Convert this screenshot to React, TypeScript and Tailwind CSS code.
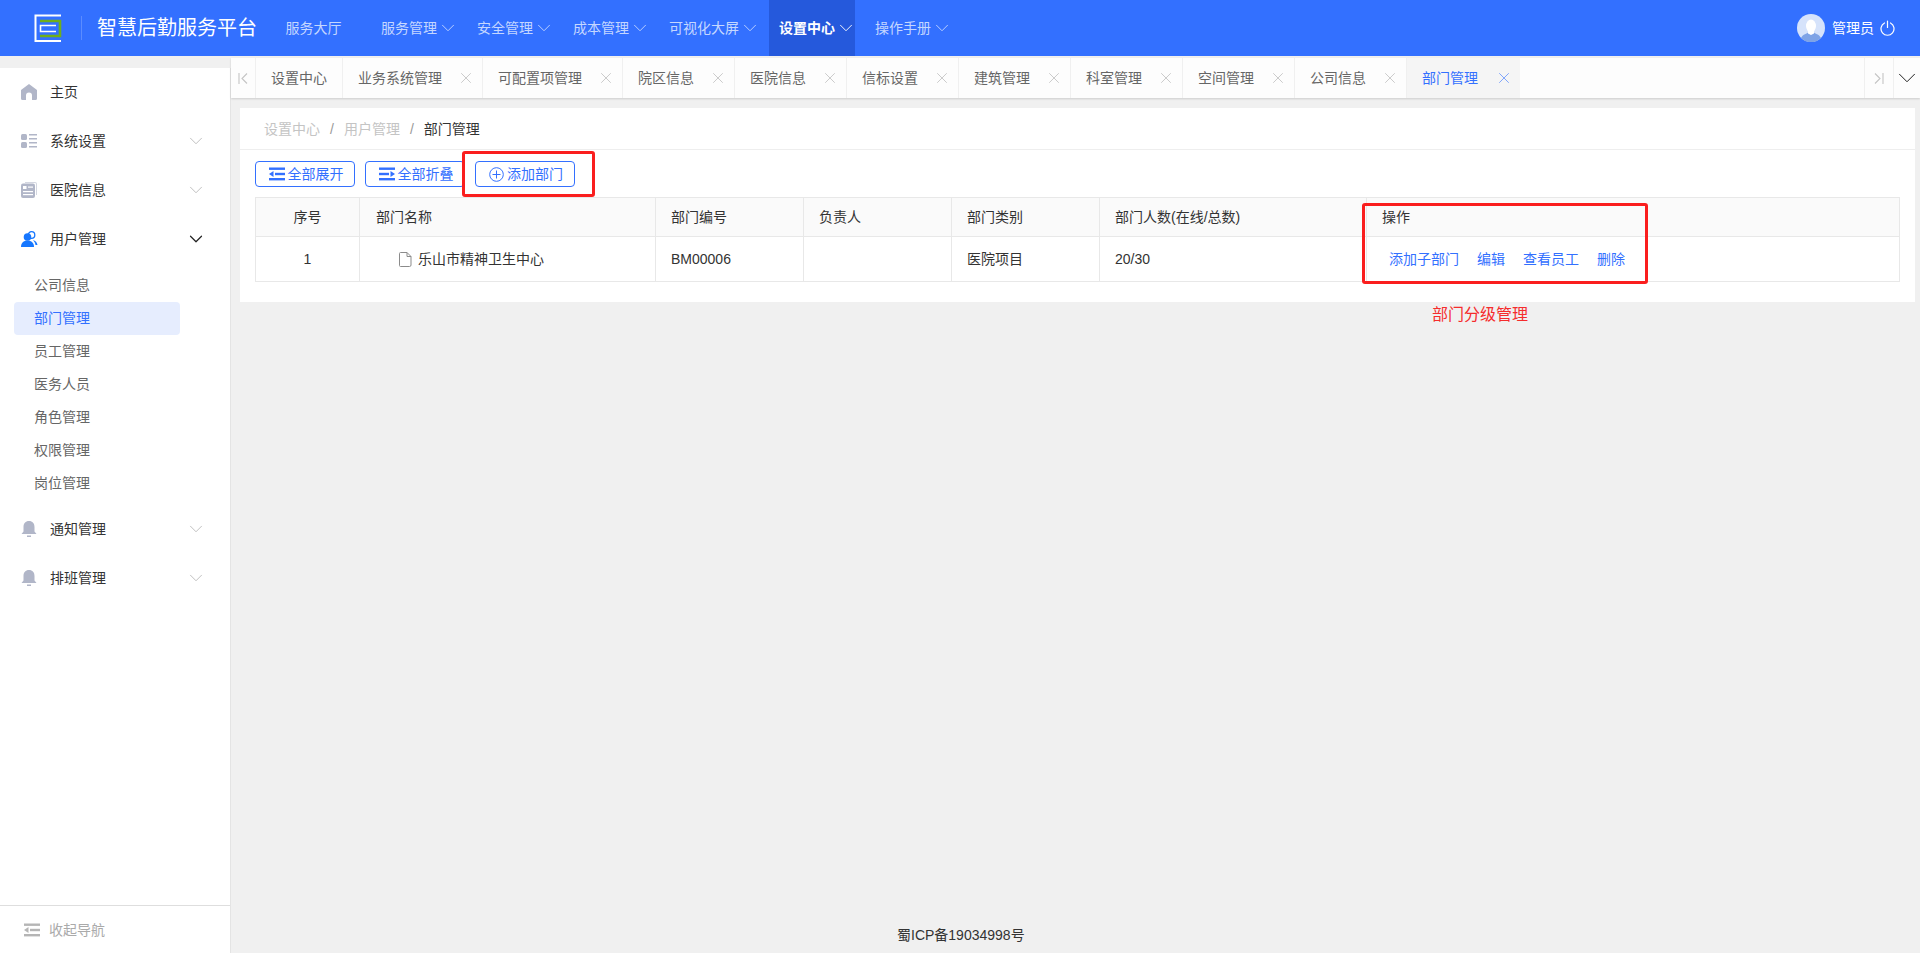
import { ChevronDown, X } from "lucide-react";

const navItems = [
  { label: "服务管理", w: "w-[86px]" },
  { label: "安全管理", w: "w-[86px]" },
  { label: "成本管理", w: "w-[86px]" },
  { label: "可视化大屏", w: "w-[100px]" },
  { label: "设置中心", w: "w-[86px]", active: true },
  { label: "操作手册", w: "w-[86px]" },
];

const tabs = [
  { label: "业务系统管理", w: "w-[140px]" },
  { label: "可配置项管理", w: "w-[140px]" },
  { label: "院区信息", w: "w-[112px]" },
  { label: "医院信息", w: "w-[112px]" },
  { label: "信标设置", w: "w-[112px]" },
  { label: "建筑管理", w: "w-[112px]" },
  { label: "科室管理", w: "w-[112px]" },
  { label: "空间管理", w: "w-[112px]" },
  { label: "公司信息", w: "w-[112px]" },
];

const subMenu = ["公司信息", "部门管理", "员工管理", "医务人员", "角色管理", "权限管理", "岗位管理"];

function Logo() {
  return (
    <svg width="28" height="28" viewBox="0 0 28 28" fill="none">
      <path d="M27 1.500H1.500V27H27" stroke="#fff" strokeWidth="2" />
      <path d="M6 7H26V22H6" stroke="#6fae1c" strokeWidth="2.600" />
      <path d="M22 11.500H6.500V17.500H22" stroke="#fff" strokeWidth="1.600" />
    </svg>
  );
}

function Avatar() {
  return (
    <svg width="28" height="28" viewBox="0 0 28 28">
      <circle cx="14" cy="14" r="14" fill="#d6e3fb" />
      <path d="M4 24c2-4 6-4.500 7.500-5.500h5C18 19.500 22 20 24 24a14 14 0 0 1-20 0z" fill="#7ea3e6" />
      <ellipse cx="14" cy="12" rx="5" ry="6.500" fill="#fff" />
      <path d="M11 16h6v3.500l-3 1.500-3-1.500z" fill="#fff" />
    </svg>
  );
}

function PowerIcon() {
  return (
    <svg width="15" height="16" viewBox="0 0 15 16" fill="none" stroke="#fff" strokeWidth="1.200" strokeLinecap="round">
      <path d="M4.500 3a6.500 6.500 0 1 0 6 0" />
      <path d="M7.500 1v6.500" />
    </svg>
  );
}

function HomeIcon() {
  return (
    <svg width="16" height="16" viewBox="0 0 16 16" fill="#b1b6c8">
      <path d="M8 0l8 6v8.500a1.500 1.500 0 0 1-1.500 1.500H11v-4.500a3 3 0 0 0-6 0V16H1.500A1.500 1.500 0 0 1 0 14.500V6z" />
    </svg>
  );
}

function GridIcon() {
  return (
    <svg width="16" height="16" viewBox="0 0 16 16" fill="#b1b6c8">
      <rect x="0" y="1" width="6" height="6" rx="1.500" />
      <rect x="0" y="9" width="6" height="6" rx="1.500" />
      <rect x="8" y="1" width="8" height="1.500" />
      <rect x="8" y="5" width="8" height="1.500" />
      <rect x="8" y="9" width="8" height="1.500" />
      <rect x="8" y="13" width="8" height="1.500" />
    </svg>
  );
}

function NewsIcon() {
  return (
    <svg width="16" height="16" viewBox="0 0 16 16">
      <path d="M4 0h10a2 2 0 0 1 2 2v11h-1V2a1 1 0 0 0-1-1H4z" fill="#d3d6e0" />
      <rect x="0" y="1.500" width="14" height="14.500" rx="2" fill="#b1b6c8" />
      <rect x="2" y="4" width="3.500" height="3" fill="#fff" />
      <rect x="7" y="4.500" width="5" height="1.200" fill="#fff" />
      <rect x="2" y="9" width="10" height="1.200" fill="#fff" />
      <rect x="2" y="12" width="10" height="1.200" fill="#fff" />
    </svg>
  );
}

function UserIcon() {
  return (
    <svg width="17" height="16" viewBox="0 0 17 16">
      <circle cx="10.500" cy="4" r="3.300" fill="none" stroke="#1677ff" strokeWidth="1.300" />
      <path d="M12 9c2.500.5 4 2.500 4.500 5h-2c-.3-2-1.200-3.500-2.500-5z" fill="#1677ff" />
      <circle cx="6.500" cy="6" r="3.800" fill="#1677ff" />
      <path d="M0 16c0-4 2.500-6.500 6.500-6.500S13 12 13 16z" fill="#1677ff" />
    </svg>
  );
}

function BellIcon() {
  return (
    <svg width="16" height="16" viewBox="0 0 16 16" fill="#b1b6c8">
      <path d="M8 0c3.500 0 5.500 2.500 5.500 6v4.500L15.500 13H.5l2-2.500V6C2.500 2.500 4.500 0 8 0z" />
      <rect x="6" y="14.500" width="4" height="1.500" />
    </svg>
  );
}

function CollapseIcon({ color, dir }: { color: string; dir: "left" | "right" }) {
  return (
    <svg width="16" height="14" viewBox="0 0 16 14" fill={color}>
      <rect x="0" y="0.500" width="16" height="2.400" />
      <rect x="0" y="11" width="16" height="2.400" />
      {dir === "left" ? (
        <>
          <rect x="6" y="5.800" width="10" height="2.400" />
          <path d="M0 7l4.500-3v6z" />
        </>
      ) : (
        <>
          <rect x="0" y="5.800" width="10" height="2.400" />
          <path d="M16 7l-4.500-3v6z" />
        </>
      )}
    </svg>
  );
}

function FileIcon() {
  return (
    <svg width="13" height="15" viewBox="0 0 13 15" fill="none" stroke="#8b8b8b" strokeWidth="1">
      <path d="M1.500.5h6.500l4 4v8.500a1.500 1.500 0 0 1-1.500 1.500h-9A1 1 0 0 1 .5 13.500v-12a1 1 0 0 1 1-1z" />
      <path d="M8 .5v4h4" />
    </svg>
  );
}

function EdgeArrow({ dir }: { dir: "first" | "last" }) {
  return (
    <svg width="10" height="11" viewBox="0 0 10 11" fill="none" stroke="#c4c4c4" strokeWidth="1.100">
      {dir === "first" ? (
        <>
          <path d="M1 0v11" />
          <path d="M9 .5L4 5.500l5 5" />
        </>
      ) : (
        <>
          <path d="M9 0v11" />
          <path d="M1 .5l5 5-5 5" />
        </>
      )}
    </svg>
  );
}

function SideItem({ icon, label, arrow, open }: { icon: React.ReactNode; label: string; arrow?: boolean; open?: boolean }) {
  return (
    <div className="flex h-[49px] items-center pr-[23px] pl-[21px] text-sm text-[#333]">
      <span className="flex w-[29px] shrink-0 items-center">{icon}</span>
      <span>{label}</span>
      {arrow && (
        <ChevronDown
          size={22}
          strokeWidth={open ? 1.300 : 0.800}
          className={open ? "ml-auto text-[#222]" : "ml-auto text-[#aaa]"}
        />
      )}
    </div>
  );
}

export default function App() {
  return (
    <div className="relative flex h-screen w-full flex-col overflow-hidden bg-[#f0f0f0] text-sm [font-family:'Liberation_Sans','Noto_Sans_CJK_SC',sans-serif]">
      {/* Top bar */}
      <header className="flex h-14 shrink-0 items-center bg-[#3370ff]">
        <div className="ml-[34px] flex h-7 items-center">
          <Logo />
        </div>
        <div className="ml-[19px] h-6 w-px bg-white/20" />
        <div className="ml-[15px] w-[159px] text-xl whitespace-nowrap text-white">智慧后勤服务平台</div>
        <nav className="ml-[20px] flex h-full items-center gap-[10px]">
          <a className="mr-[10px] flex h-full w-[75px] items-center justify-center text-[#c5d7ff]">服务大厅</a>
          {navItems.map((item) => (
            <a
              key={item.label}
              className={
                item.active
                  ? `flex h-full ${item.w} items-center bg-[#2559dc] pl-[10px] font-bold text-white`
                  : `flex h-full ${item.w} items-center pl-[10px] text-[#c5d7ff]`
              }
            >
              <span className="whitespace-nowrap">{item.label}</span>
              <ChevronDown
                size={22}
                strokeWidth={1}
                className={item.active ? "shrink-0 text-white" : "shrink-0 text-[#c5d7ff]"}
              />
            </a>
          ))}
        </nav>
        <div className="ml-auto flex items-center pr-[25px]">
          <Avatar />
          <span className="ml-[7px] text-white">管理员</span>
          <span className="ml-[6px] flex">
            <PowerIcon />
          </span>
        </div>
      </header>

      <div className="flex min-h-0 flex-1">
        {/* Side menu */}
        <aside className="mt-3 flex w-[231px] shrink-0 flex-col border-r border-[#e4e4e4] bg-white">
          <div className="-mt-px flex-1">
            <SideItem icon={<HomeIcon />} label="主页" />
            <SideItem icon={<GridIcon />} label="系统设置" arrow />
            <SideItem icon={<NewsIcon />} label="医院信息" arrow />
            <SideItem icon={<UserIcon />} label="用户管理" arrow open />
            <ul className="py-[5px]">
              {subMenu.map((name) => (
                <li
                  key={name}
                  className={
                    name === "部门管理"
                      ? "mx-[14px] flex h-[33px] w-[166px] translate-y-px items-center rounded bg-[#e6edfe] pb-[2px] pl-[20px] text-[#3370ff]"
                      : "mx-[14px] flex h-[33px] items-center pl-[20px] text-[#666]"
                  }
                >
                  {name}
                </li>
              ))}
            </ul>
            <SideItem icon={<BellIcon />} label="通知管理" arrow />
            <SideItem icon={<BellIcon />} label="排班管理" arrow />
          </div>
          <div className="flex h-12 items-center border-t border-[#dedede] pl-[24px] text-[#aaa]">
            <CollapseIcon color="#b5b5b5" dir="left" />
            <span className="ml-[9px]">收起导航</span>
          </div>
        </aside>

        <main className="flex min-w-0 flex-1 flex-col">
          {/* Tabs */}
          <div className="mt-[2px] flex h-10 shrink-0 bg-[#fdfdfd] shadow-[0_1px_2px_rgba(0,0,0,0.15)]">
            <div className="flex w-[25px] items-center justify-center border-r border-[#f0f0f0]">
              <EdgeArrow dir="first" />
            </div>
            <div className="flex w-[87px] items-center border-r border-[#f0f0f0] pl-[15px] text-[#666]">设置中心</div>
            {tabs.map((tab) => (
              <div
                key={tab.label}
                className={`flex ${tab.w} items-center justify-between border-r border-[#f0f0f0] pr-[7px] pl-[15px] text-[#666]`}
              >
                <span className="whitespace-nowrap">{tab.label}</span>
                <X size={18} strokeWidth={0.800} className="shrink-0 text-[#aaa]" />
              </div>
            ))}
            <div className="flex w-[113px] items-center justify-between bg-[#f5f5f5] pr-[7px] pl-[15px] text-[#3370ff]">
              <span className="whitespace-nowrap">部门管理</span>
              <X size={18} strokeWidth={0.800} className="shrink-0 text-[#3370ff]" />
            </div>
            <div className="flex-1" />
            <div className="flex w-[30px] items-center justify-center border-x border-[#f0f0f0]">
              <EdgeArrow dir="last" />
            </div>
            <div className="flex w-[26px] items-center justify-center">
              <ChevronDown size={30} strokeWidth={0.800} className="shrink-0 text-[#222]" />
            </div>
          </div>

          {/* Card */}
          <section className="mt-[10px] mr-[5px] ml-[9px] bg-white pb-[20px]">
            <div className="flex h-[42px] items-center gap-[8px] border-b border-[#eeeeee] pl-[24px]">
              <span className="text-[#c4c4c4]">设置中心</span>
              <span className="mx-[2px] text-[#999]">/</span>
              <span className="text-[#c4c4c4]">用户管理</span>
              <span className="mx-[2px] text-[#999]">/</span>
              <span className="text-[#333]">部门管理</span>
            </div>
            <div className="mt-[11px] flex gap-[10px] px-[15px]">
              <button className="flex h-[26px] w-[100px] items-center justify-center gap-[3px] rounded border border-[#3370ff] pl-[2px] text-[#3370ff]">
                <CollapseIcon color="#3370ff" dir="left" />
                全部展开
              </button>
              <button className="flex h-[26px] w-[100px] items-center justify-center gap-[3px] rounded border border-[#3370ff] pl-[2px] text-[#3370ff]">
                <CollapseIcon color="#3370ff" dir="right" />
                全部折叠
              </button>
              <button className="flex h-[26px] w-[100px] items-center justify-center gap-[3px] rounded border border-[#3370ff] pl-[2px] text-[#3370ff]">
                <svg width="15" height="15" viewBox="0 0 15 15" fill="none" stroke="#3370ff" strokeWidth="1">
                  <circle cx="7.500" cy="7.500" r="6.800" />
                  <path d="M7.500 3.500v8M3.500 7.500h8" />
                </svg>
                添加部门
              </button>
            </div>
            <div className="mx-[15px] mt-[10px]">
              <table className="w-full table-fixed border-collapse border border-[#e8e8e8] text-sm text-[#333]">
                <colgroup>
                  <col className="w-[104px]" />
                  <col className="w-[296px]" />
                  <col className="w-[148px]" />
                  <col className="w-[148px]" />
                  <col className="w-[148px]" />
                  <col className="w-[267px]" />
                  <col />
                </colgroup>
                <thead>
                  <tr className="h-[39px] bg-[#fafafa] text-left">
                    <th className="border border-[#e8e8e8] text-center font-normal">序号</th>
                    <th className="border border-[#e8e8e8] pl-4 font-normal">部门名称</th>
                    <th className="border border-[#e8e8e8] pl-[15px] font-normal">部门编号</th>
                    <th className="border border-[#e8e8e8] pl-[15px] font-normal">负责人</th>
                    <th className="border border-[#e8e8e8] pl-[15px] font-normal">部门类别</th>
                    <th className="border border-[#e8e8e8] pl-[15px] font-normal">部门人数(在线/总数)</th>
                    <th className="border-y border-[#e8e8e8] pl-[15px] font-normal">操作</th>
                  </tr>
                </thead>
                <tbody>
                  <tr className="h-[45px]">
                    <td className="border border-[#e8e8e8] text-center">1</td>
                    <td className="border border-[#e8e8e8] pl-[39px]">
                      <span className="flex items-center gap-[6px]">
                        <FileIcon />
                        乐山市精神卫生中心
                      </span>
                    </td>
                    <td className="border border-[#e8e8e8] pl-[15px]">BM00006</td>
                    <td className="border border-[#e8e8e8] pl-[15px]" />
                    <td className="border border-[#e8e8e8] pl-[15px]">医院项目</td>
                    <td className="border border-[#e8e8e8] pl-[15px]">20/30</td>
                    <td className="border-y border-[#e8e8e8] pl-[22px] text-[#3370ff]">
                      <span className="flex gap-[18px]">
                        <a>添加子部门</a>
                        <a>编辑</a>
                        <a>查看员工</a>
                        <a>删除</a>
                      </span>
                    </td>
                  </tr>
                </tbody>
              </table>
            </div>
          </section>

          <div className="mt-auto pb-[8px] pl-[666px] text-[#333]">蜀ICP备19034998号</div>
        </main>
      </div>

      {/* Red annotations drawn over the page */}
      <div className="absolute top-[151px] left-[462px] h-[46px] w-[133px] rounded-[3px] border-[3px] border-[#fa1e1e]" />
      <div className="absolute top-[203px] left-[1362px] h-[81px] w-[286px] rounded-[3px] border-[3px] border-[#fa1e1e]" />
      <div className="absolute top-[303px] left-[1432px] text-base text-[#f52c2c]">部门分级管理</div>
    </div>
  );
}
